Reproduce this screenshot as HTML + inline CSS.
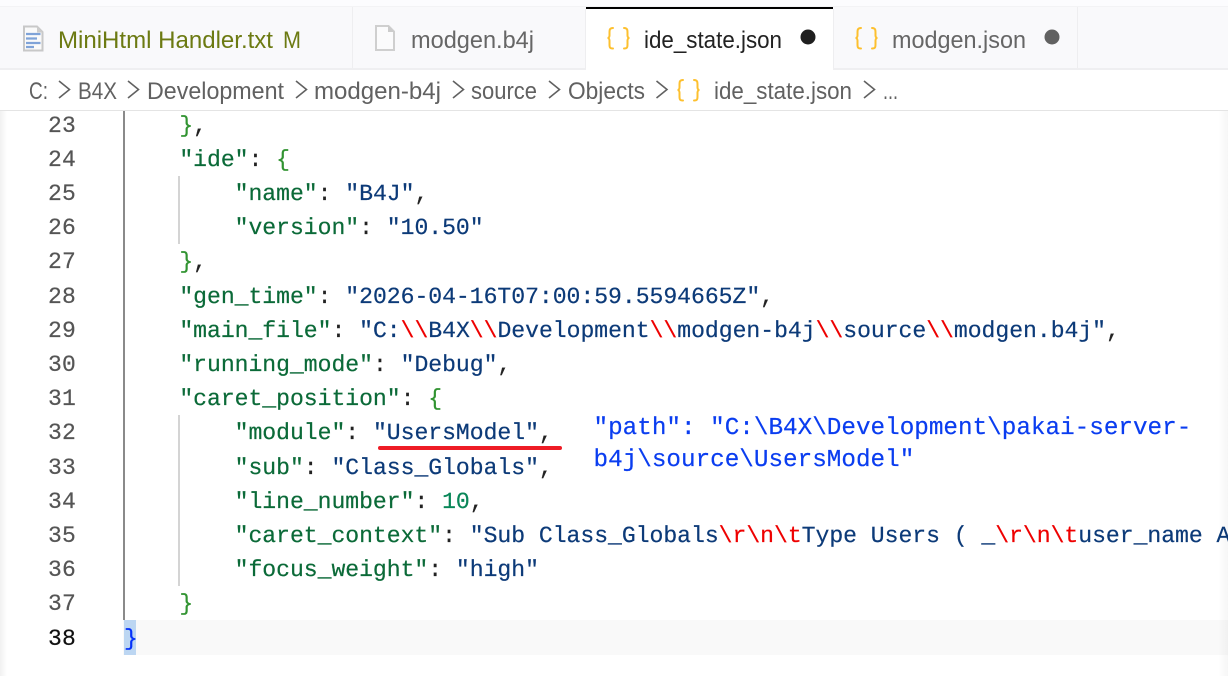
<!DOCTYPE html>
<html><head><meta charset="utf-8"><style>
html,body{margin:0;padding:0;width:1228px;height:676px;overflow:hidden;background:#fff}
#c{position:absolute;left:0;top:0;width:1228px;height:676px;overflow:hidden;background:#fff}
.l{position:absolute;left:124px;height:34.2px;white-space:pre;font:23.1px/34.2px "Liberation Mono",monospace;letter-spacing:-.03px;color:#222;text-rendering:geometricPrecision;-webkit-text-stroke:.2px currentColor;margin-top:1.500px}
.n{position:absolute;left:30px;width:46px;text-align:right;font:23px/34.2px "Liberation Mono",monospace;color:#555;letter-spacing:.2px;-webkit-text-stroke:.2px currentColor;margin-top:1.500px}
.k{color:#0b6a38}.s{color:#0c3a78}.b{color:#319331}.e{color:#e00}.d{color:#098658}
.a{position:absolute;left:593.500px;white-space:pre;font:24.3px/31px "Liberation Mono",monospace;color:#0a3df0;text-rendering:geometricPrecision;-webkit-text-stroke:.2px currentColor}
svg text{font-family:"Liberation Sans",sans-serif;font-size:24px}
</style></head><body><div id="c">
<div style="position:absolute;left:123px;top:620px;width:1105px;height:35px;background:#f9f9f9"></div>
<div style="position:absolute;left:124px;top:620px;width:12px;height:35px;background:#bcd6f2"></div>
<div style="position:absolute;left:123px;top:110px;width:2px;height:510px;background:#8a8a8a"></div>
<div style="position:absolute;left:178px;top:176px;width:2px;height:68px;background:#d4d4d4"></div>
<div style="position:absolute;left:178px;top:415px;width:2px;height:171px;background:#d4d4d4"></div>

<div class="n" style="top:107px">23</div><div class="l" style="top:107px">    <span class="b">}</span>,</div>
<div class="n" style="top:141.2px">24</div><div class="l" style="top:141.2px">    <span class="k">"ide"</span>: <span class="b">{</span></div>
<div class="n" style="top:175.4px">25</div><div class="l" style="top:175.4px">        <span class="k">"name"</span>: <span class="s">"B4J"</span>,</div>
<div class="n" style="top:209.6px">26</div><div class="l" style="top:209.6px">        <span class="k">"version"</span>: <span class="s">"10.50"</span></div>
<div class="n" style="top:243.8px">27</div><div class="l" style="top:243.8px">    <span class="b">}</span>,</div>
<div class="n" style="top:278px">28</div><div class="l" style="top:278px">    <span class="k">"gen_time"</span>: <span class="s">"2026-04-16T07:00:59.5594665Z"</span>,</div>
<div class="n" style="top:312.2px">29</div><div class="l" style="top:312.2px">    <span class="k">"main_file"</span>: <span class="s">"C:<span class="e">\\</span>B4X<span class="e">\\</span>Development<span class="e">\\</span>modgen-b4j<span class="e">\\</span>source<span class="e">\\</span>modgen.b4j"</span>,</div>
<div class="n" style="top:346.4px">30</div><div class="l" style="top:346.4px">    <span class="k">"running_mode"</span>: <span class="s">"Debug"</span>,</div>
<div class="n" style="top:380.6px">31</div><div class="l" style="top:380.6px">    <span class="k">"caret_position"</span>: <span class="b">{</span></div>
<div class="n" style="top:414.8px">32</div><div class="l" style="top:414.8px">        <span class="k">"module"</span>: <span class="s">"UsersModel"</span>,</div>
<div class="n" style="top:449px">33</div><div class="l" style="top:449px">        <span class="k">"sub"</span>: <span class="s">"Class_Globals"</span>,</div>
<div class="n" style="top:483.2px">34</div><div class="l" style="top:483.2px">        <span class="k">"line_number"</span>: <span class="d">10</span>,</div>
<div class="n" style="top:517.4px">35</div><div class="l" style="top:517.4px">        <span class="k">"caret_context"</span>: <span class="s">"Sub Class_Globals<span class="e">\r\n\t</span>Type Users ( _<span class="e">\r\n\t</span>user_name A</span></div>
<div class="n" style="top:551.6px">36</div><div class="l" style="top:551.6px">        <span class="k">"focus_weight"</span>: <span class="s">"high"</span></div>
<div class="n" style="top:585.8px">37</div><div class="l" style="top:585.8px">    <span class="b">}</span></div>
<div class="n" style="top:620px;color:#111">38</div><div class="l" style="top:620px"><span style="color:#0431fa">}</span></div>

<div style="position:absolute;left:378px;top:446px;width:184px;height:4px;border-radius:2px;background:#ee1c25"></div>
<div class="a" style="top:413px">"path": "C:\B4X\Development\pakai-server-</div>
<div class="a" style="top:445px">b4j\source\UsersModel"</div>

<div style="position:absolute;left:0;top:110px;width:7px;height:566px;background:linear-gradient(90deg,rgba(0,0,0,.06),rgba(0,0,0,0))"></div>
<div style="position:absolute;left:1218px;top:110px;width:10px;height:566px;background:linear-gradient(90deg,rgba(0,0,0,0),rgba(0,0,0,.035))"></div>

<svg width="1228" height="111" style="position:absolute;left:0;top:0" xmlns="http://www.w3.org/2000/svg">
<rect width="1228" height="111" fill="#fff"/>
<rect width="1228" height="6" fill="#fcfcfe"/>
<rect y="6" width="1228" height="63" fill="#f9f9fb"/>
<rect y="6" width="1228" height="1" fill="#f3f3f5"/>
<rect y="68" width="1228" height="2" fill="#efeff1"/>
<rect x="352" y="7" width="1" height="61" fill="#eeeef0"/>
<rect x="586" y="7" width="247" height="63" fill="#fff"/>
<rect x="586" y="7" width="247" height="2" fill="#000"/>
<rect x="585" y="9" width="1" height="60" fill="#eeeef0"/>
<rect x="833" y="9" width="1" height="59" fill="#eeeef0"/>
<rect x="1077" y="7" width="1" height="61" fill="#eeeef0"/>
<rect y="110" width="1228" height="1" fill="#e4e4e4"/>

<path d="M24 26.500H37L42.500 32V50.500H24Z" fill="#fafafa" stroke="#c8c8c8" stroke-width="2"/>
<path d="M37 26V32.500H43" fill="#ccc"/>
<path d="M26 34H40.500M26 38.500H37M26 43H40.500M26 47H34" stroke="#7fa3d8" stroke-width="2.200" fill="none"/>
<path d="M376 26H388.500L394 31.500V50H376Z" fill="#fbfbfc" stroke="#cfcfcf" stroke-width="2"/>
<path d="M388 25.500V32H394.500" fill="#ccc"/>

<g fill="none" stroke="#fdc02f" stroke-width="2" stroke-linecap="round">
<path d="M613 28C609.500 28 609.500 30 609.500 33V35.500C609.500 37 608.500 38 607.500 38C608.500 38 609.500 39 609.500 40.500V44C609.500 47 609.500 48.500 613 48.500M624 28C627.500 28 627.500 30 627.500 33V35.500C627.500 37 628.500 38 629.500 38C628.500 38 627.500 39 627.500 40.500V44C627.500 47 627.500 48.500 624 48.500"/>
<path transform="translate(248 0)" d="M613 28C609.500 28 609.500 30 609.500 33V35.500C609.500 37 608.500 38 607.500 38C608.500 38 609.500 39 609.500 40.500V44C609.500 47 609.500 48.500 613 48.500M624 28C627.500 28 627.500 30 627.500 33V35.500C627.500 37 628.500 38 629.500 38C628.500 38 627.500 39 627.500 40.500V44C627.500 47 627.500 48.500 624 48.500"/>
<path transform="translate(70 52)" d="M613 28C609.500 28 609.500 30 609.500 33V35.500C609.500 37 608.500 38 607.500 38C608.500 38 609.500 39 609.500 40.500V44C609.500 47 609.500 48.500 613 48.500M624 28C627.500 28 627.500 30 627.500 33V35.500C627.500 37 628.500 38 629.500 38C628.500 38 627.500 39 627.500 40.500V44C627.500 47 627.500 48.500 624 48.500"/>
</g>

<text x="58" y="48" textLength="215" lengthAdjust="spacingAndGlyphs" fill="#6c7a12">MiniHtml Handler.txt</text>
<text x="283" y="48" textLength="18" lengthAdjust="spacingAndGlyphs" fill="#6c7a12">M</text>
<text x="411" y="48" textLength="123" lengthAdjust="spacingAndGlyphs" fill="#666">modgen.b4j</text>
<text x="644" y="48" textLength="138" lengthAdjust="spacingAndGlyphs" fill="#222">ide_state.json</text>
<circle cx="808" cy="37" r="7.500" fill="#1f1f1f"/>
<text x="892" y="48" textLength="134" lengthAdjust="spacingAndGlyphs" fill="#666">modgen.json</text>
<circle cx="1052" cy="37" r="7.500" fill="#616161"/>

<g fill="#616161">
<text x="29" y="99" textLength="19" lengthAdjust="spacingAndGlyphs">C:</text>
<text x="78" y="99" textLength="39" lengthAdjust="spacingAndGlyphs">B4X</text>
<text x="147" y="99" textLength="137" lengthAdjust="spacingAndGlyphs">Development</text>
<text x="314" y="99" textLength="127" lengthAdjust="spacingAndGlyphs">modgen-b4j</text>
<text x="471" y="99" textLength="66" lengthAdjust="spacingAndGlyphs">source</text>
<text x="568" y="99" textLength="77" lengthAdjust="spacingAndGlyphs">Objects</text>
<text x="714" y="99" textLength="138" lengthAdjust="spacingAndGlyphs">ide_state.json</text>
<text x="883" y="99" textLength="15" lengthAdjust="spacingAndGlyphs">...</text>
</g>
<g fill="none" stroke="#616161" stroke-width="1.600">
<path d="M59 81L69.500 89.500L59 98"/>
<path d="M128 81L138.500 89.500L128 98"/>
<path d="M296 81L306.500 89.500L296 98"/>
<path d="M453 81L463.500 89.500L453 98"/>
<path d="M549 81L559.500 89.500L549 98"/>
<path d="M656.500 81L667 89.500L656.500 98"/>
<path d="M864 81L874.500 89.500L864 98"/>
</g>
</svg>
</div></body></html>
